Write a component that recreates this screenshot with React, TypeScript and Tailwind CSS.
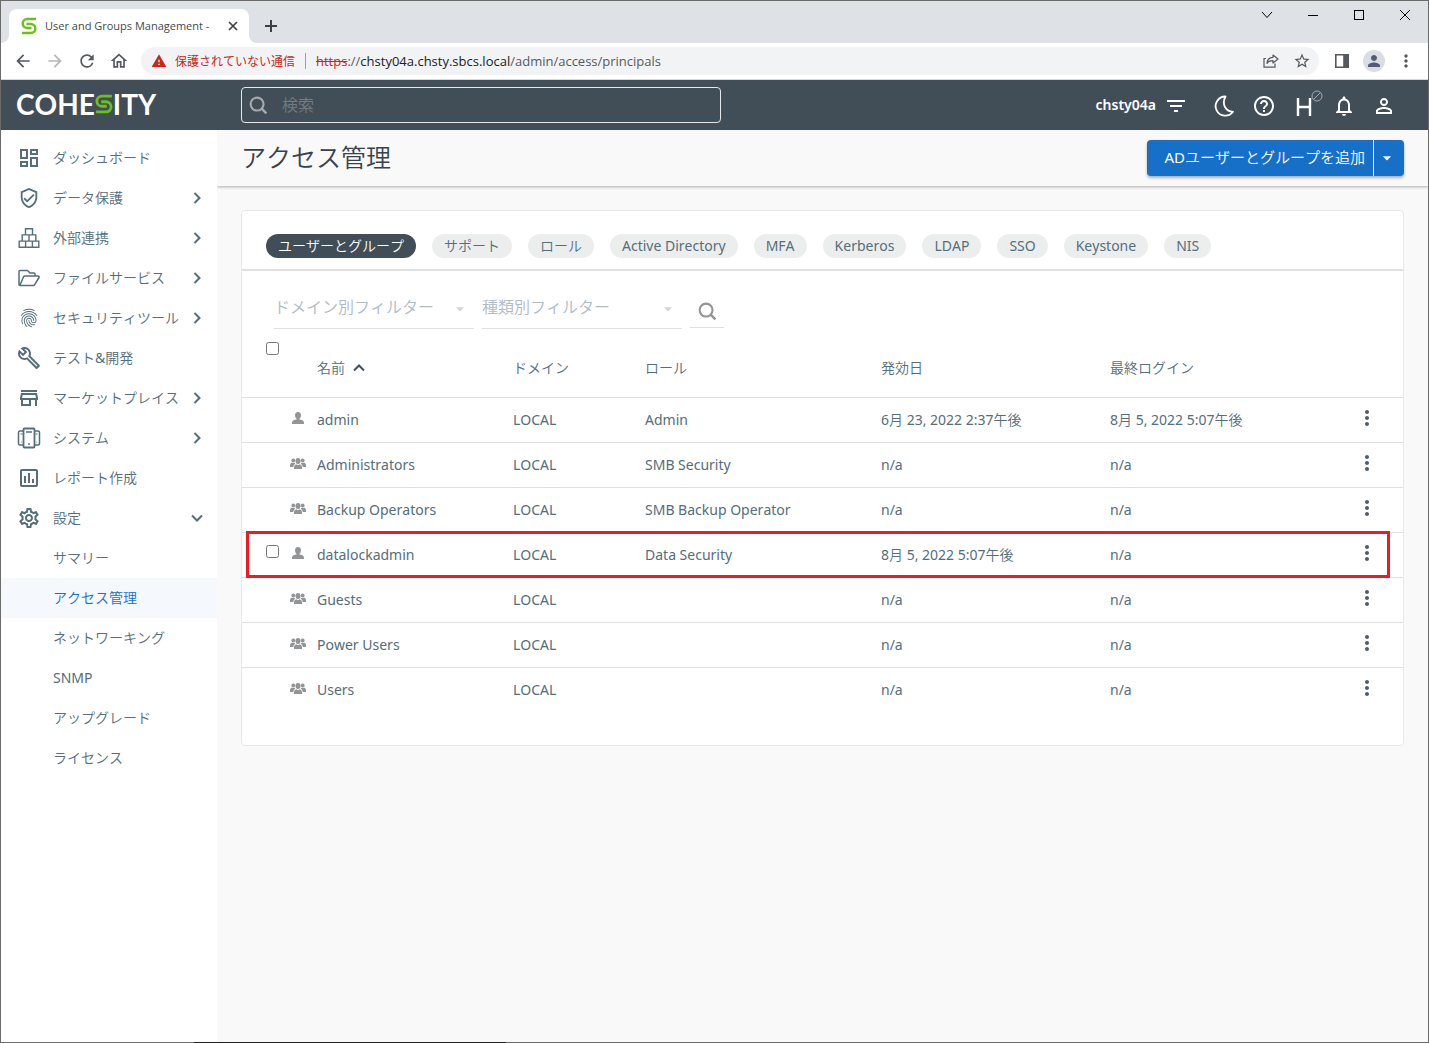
import type { ReactNode } from 'react'
import {
  MdArrowBack,
  MdArrowForward,
  MdRefresh,
  MdOutlineHome,
  MdWarning,
  MdStarBorder,
  MdMoreVert,
  MdPerson,
  MdFilterList,
  MdHelpOutline,
  MdNotificationsNone,
  MdPersonOutline,
  MdOutlineDashboard,
  MdOutlineVerifiedUser,
  MdFingerprint,
  MdOutlineBuild,
  MdOutlineStore,
  MdOutlineAssessment,
  MdOutlineSettings,
  MdArrowDropDown,
} from 'react-icons/md'

type NavItem = {
  label: string
  icon: ReactNode
  arrow?: 'right' | 'down'
}

type Principal = {
  name: string
  group: boolean
  role: string
  effective: string
  lastLogin: string
  selectable?: boolean
}

const principals: Principal[] = [
  { name: 'admin', group: false, role: 'Admin', effective: '6月 23, 2022 2:37午後', lastLogin: '8月 5, 2022 5:07午後' },
  { name: 'Administrators', group: true, role: 'SMB Security', effective: 'n/a', lastLogin: 'n/a' },
  { name: 'Backup Operators', group: true, role: 'SMB Backup Operator', effective: 'n/a', lastLogin: 'n/a' },
  { name: 'datalockadmin', group: false, role: 'Data Security', effective: '8月 5, 2022 5:07午後', lastLogin: 'n/a', selectable: true },
  { name: 'Guests', group: true, role: '', effective: 'n/a', lastLogin: 'n/a' },
  { name: 'Power Users', group: true, role: '', effective: 'n/a', lastLogin: 'n/a' },
  { name: 'Users', group: true, role: '', effective: 'n/a', lastLogin: 'n/a' },
]

const tabs = ['ユーザーとグループ', 'サポート', 'ロール', 'Active Directory', 'MFA', 'Kerberos', 'LDAP', 'SSO', 'Keystone', 'NIS']

const subItems = ['サマリー', 'アクセス管理', 'ネットワーキング', 'SNMP', 'アップグレード', 'ライセンス']

function CohesityMark({ className }: { className: string }) {
  return (
    <svg viewBox="0 0 16 18" className={className} fill="none" stroke="#6cc01e" strokeWidth="2.5" aria-hidden="true">
      <path d="M15 2H6.200a4.500 4.500 0 0 0 0 9H10.500" />
      <path d="M5.500 7H9.800a4.500 4.500 0 0 1 0 9H1" />
    </svg>
  )
}

function SearchIcon({ className }: { className: string }) {
  return (
    <svg viewBox="0 0 20 20" className={className} fill="none" stroke="currentColor" strokeWidth="2.2" aria-hidden="true">
      <circle cx="8.500" cy="8.500" r="6.800" />
      <path d="M13.300 13.300l5 5" strokeWidth="2.600" />
    </svg>
  )
}

function Chevron({ className }: { className: string }) {
  return (
    <svg viewBox="0 0 12 12" className={className} fill="none" stroke="currentColor" strokeWidth="2" aria-hidden="true">
      <path d="M3.500 1l5 5-5 5" />
    </svg>
  )
}

function BlocksIcon() {
  return (
    <svg viewBox="0 0 22 22" className="size-[22px]" fill="none" stroke="currentColor" strokeWidth="1.400" aria-hidden="true">
      <path d="M7.500 1.700h7v6.200h-7zM4.200 7.900h6.800v6.200H4.200zM11 7.900h6.800v6.200H11zM1.200 14.100h6.400v6.200H1.200zM7.600 14.100h6.800v6.200H7.600zM14.400 14.100h6.400v6.200h-6.400z" />
    </svg>
  )
}

function FolderIcon() {
  return (
    <svg viewBox="0 0 22 18" className="h-[18px] w-[22px]" fill="none" stroke="currentColor" strokeWidth="1.500" strokeLinejoin="round" aria-hidden="true">
      <path d="M17 7V5q0-1-1-1h-4L9.500 1.500H2q-1 0-1 1v13q0 1 1 1h13.500q.8 0 1.200-.8L21 8.500Q21.500 7 20 7H7q-1 0-1.400.8L2 16" />
    </svg>
  )
}

function SystemIcon() {
  return (
    <svg viewBox="0 0 24 22" className="h-[22px] w-6" fill="none" stroke="currentColor" strokeWidth="1.500" aria-hidden="true">
      <rect x="6.500" y="1.500" width="11" height="19" rx="1" strokeWidth="1.800" />
      <path d="M6 4H3Q1.500 4 1.500 5.500v11Q1.500 18 3 18h3M18 4h3q1.500 0 1.500 1.500v11Q22.500 18 21 18h-3M9 5h6" />
      <path d="M3.500 7h2M18.500 7h2" strokeWidth="1" />
      <circle cx="12" cy="17" r=".9" fill="currentColor" stroke="none" />
      <circle cx="4.300" cy="15" r=".5" fill="currentColor" stroke="none" />
      <circle cx="19.700" cy="15" r=".5" fill="currentColor" stroke="none" />
    </svg>
  )
}

function UserIcon() {
  return (
    <svg viewBox="0 0 12 12" className="size-3" fill="currentColor" aria-hidden="true">
      <path d="M6 0c2 0 3 1.300 3 3.200C9 5 8 6.600 7.200 7v.3l3.200.9c1 .4 1.400 1.200 1.600 2.600v1.200H0v-1.200c.2-1.400.6-2.200 1.600-2.600l3.200-.9V7C4 6.600 3 5 3 3.200 3 1.300 4 0 6 0z" />
    </svg>
  )
}

function GroupIcon() {
  return (
    <svg viewBox="0 0 16 11" className="h-[11px] w-4" fill="currentColor" aria-hidden="true">
      <circle cx="3.300" cy="2.400" r="1.900" />
      <circle cx="12.700" cy="2.400" r="1.900" />
      <ellipse cx="8" cy="3" rx="2.500" ry="3" />
      <path d="M0 9V7q.2-1.900 1.600-2.300h2.600q.6.200 1 .8Q3.400 7 3.200 9zM16 9V7q-.2-1.900-1.600-2.300h-2.600q-.6.200-1 .8Q12.600 7 12.800 9zM4 11V9q.2-2.200 2.200-2.700L8 7.200l1.800-.9Q11.800 6.800 12 9v2z" />
    </svg>
  )
}

const navItems: NavItem[] = [
  { label: 'ダッシュボード', icon: <MdOutlineDashboard className="size-6" /> },
  { label: 'データ保護', icon: <MdOutlineVerifiedUser className="size-[22px]" />, arrow: 'right' },
  { label: '外部連携', icon: <BlocksIcon />, arrow: 'right' },
  { label: 'ファイルサービス', icon: <FolderIcon />, arrow: 'right' },
  { label: 'セキュリティツール', icon: <MdFingerprint className="size-[22px]" />, arrow: 'right' },
  { label: 'テスト&開発', icon: <MdOutlineBuild className="size-6" /> },
  { label: 'マーケットプレイス', icon: <MdOutlineStore className="size-6" />, arrow: 'right' },
  { label: 'システム', icon: <SystemIcon />, arrow: 'right' },
  { label: 'レポート作成', icon: <MdOutlineAssessment className="size-6" /> },
  { label: '設定', icon: <MdOutlineSettings className="size-6" />, arrow: 'down' },
]

function BrowserChrome() {
  return (
    <div className="font-['Open_Sans','Noto_Sans_CJK_JP',sans-serif]">
      <div className="flex h-[42px] items-end bg-[#dee1e6]">
        <div className="relative ml-2 flex h-[34px] w-60 items-center rounded-t-lg bg-white pl-3">
          <svg viewBox="0 0 8 8" className="absolute -left-2 bottom-0 size-2 fill-white"><path d="M8 0v8H0a8 8 0 0 0 8-8z" /></svg>
          <svg viewBox="0 0 8 8" className="absolute -right-2 bottom-0 size-2 fill-white"><path d="M0 0v8h8a8 8 0 0 1-8-8z" /></svg>
          <CohesityMark className="h-[18px] w-4" />
          <span className="ml-2 text-[11px] leading-4 whitespace-nowrap text-[#45494d]">User and Groups Management -</span>
          <button aria-label="タブを閉じる" className="mr-[11px] ml-auto text-[#3c4043]">
            <svg viewBox="0 0 10 10" className="size-[10px]" fill="none" stroke="currentColor" strokeWidth="1.700"><path d="M1 1l8 8M9 1L1 9" /></svg>
          </button>
        </div>
        <button aria-label="新しいタブ" className="mb-[11px] ml-4 text-[#3c4043]">
          <svg viewBox="0 0 12 12" className="size-3" fill="none" stroke="currentColor" strokeWidth="2"><path d="M6 0v12M0 6h12" /></svg>
        </button>
        <div className="mr-[17px] mb-[22px] ml-auto flex items-center gap-[34px] text-black">
          <button aria-label="タブを検索"><svg viewBox="0 0 12 12" className="size-3" fill="none" stroke="currentColor"><path d="M1 3l5 5.500L11 3" /></svg></button>
          <button aria-label="最小化"><svg viewBox="0 0 12 12" className="size-3" fill="none" stroke="currentColor" shapeRendering="crispEdges"><path d="M1 6.500h10" /></svg></button>
          <button aria-label="最大化"><svg viewBox="0 0 12 12" className="size-3" fill="none" stroke="currentColor" shapeRendering="crispEdges"><path d="M1.500 1.500h9v9h-9z" /></svg></button>
          <button aria-label="閉じる"><svg viewBox="0 0 12 12" className="size-3" fill="none" stroke="currentColor"><path d="M1 1l10 10M11 1L1 11" /></svg></button>
        </div>
      </div>
      <div className="flex h-[37px] items-center border-b border-[#d6d8da] bg-white pl-3 text-[#55595e]">
        <button aria-label="戻る"><MdArrowBack className="size-5" /></button>
        <button aria-label="進む" className="ml-3 text-[#b5b7ba]"><MdArrowForward className="size-5" /></button>
        <button aria-label="再読み込み" className="ml-3"><MdRefresh className="size-5" /></button>
        <button aria-label="ホーム" className="ml-3"><MdOutlineHome className="size-5" /></button>
        <div className="ml-3 flex h-7 flex-1 items-center rounded-full bg-[#f1f3f4] pr-2 pl-[10px] text-[13px] leading-5">
          <MdWarning className="size-4 text-[#c5291c]" />
          <span className="ml-2 font-['Noto_Sans_CJK_JP',sans-serif] text-xs text-[#c5291c]">保護されていない通信</span>
          <span className="mx-[10px] h-4 w-px bg-[#9aa0a6]" />
          <span className="text-[#55595e]">
            <span className="text-[#c5291c] line-through">https</span>://<span className="text-[#202124]">chsty04a.chsty.sbcs.local</span>/admin/access/principals
          </span>
          <button aria-label="共有" className="ml-auto">
            <svg viewBox="0 0 16 14" className="h-[14px] w-4" fill="none" stroke="currentColor" strokeWidth="1.200">
              <path d="M3 4.500H1v8.700h11V9.500" />
              <path d="M10 1l5 4-5 4V6.700C7 6.600 5 7.300 4 9.500 4.200 6 6.500 3.600 10 3.300z" strokeLinejoin="round" />
            </svg>
          </button>
          <button aria-label="ブックマーク" className="ml-[14px]"><MdStarBorder className="size-[18px]" /></button>
        </div>
        <button aria-label="サイドパネル" className="ml-4">
          <svg viewBox="0 0 14 14" className="size-[14px]" fill="none" stroke="currentColor" strokeWidth="1.600"><path d="M.8.8h12.400v12.400H.8z" /><path d="M9 1h4v12H9z" fill="currentColor" /></svg>
        </button>
        <button aria-label="プロフィール" className="ml-[14px] flex size-[22px] items-center justify-center rounded-full bg-[#dadde3] text-[#535c75]"><MdPerson className="size-[18px]" /></button>
        <button aria-label="メニュー" className="mr-3 ml-[11px]"><MdMoreVert className="size-5" /></button>
      </div>
    </div>
  )
}

function Header() {
  return (
    <header className="flex h-[50px] items-center bg-[#414e58] pr-8 text-white">
      <div className="flex w-60 items-center pb-0.5 pl-[15px] font-['Lato',sans-serif] text-[28px] leading-[28px] font-bold">
        COHE
        <CohesityMark className="h-[22px] w-[18px]" />
        ITY
      </div>
      <label className="flex h-9 w-[480px] items-center rounded border border-[#e6e8ea] pl-[7px]">
        <SearchIcon className="size-[19px] text-[#a5a9ad]" />
        <input type="search" aria-label="検索" placeholder="検索" className="ml-[14px] min-w-0 flex-1 bg-transparent text-base outline-none placeholder:text-[#747c82]" />
      </label>
      <div className="ml-auto flex items-center pt-0.5">
        <button className="flex items-center text-sm leading-5 font-semibold">
          <span className="pb-0.5">chsty04a</span>
          <MdFilterList className="ml-2 size-6" />
        </button>
        <div className="ml-6 flex items-center gap-4">
          <button aria-label="ダークモード">
            <svg viewBox="0 0 24 24" className="size-6" fill="none" stroke="currentColor" strokeWidth="1.800" strokeLinejoin="round"><path d="M13.500 2.500A9.600 9.600 0 1 0 21 17.800C14.500 17.500 9 11 13.500 2.500z" /></svg>
          </button>
          <button aria-label="ヘルプ"><MdHelpOutline className="size-6" /></button>
          <button aria-label="Helios" className="relative size-6">
            <svg viewBox="0 0 24 24" className="size-6" fill="none" stroke="currentColor" strokeWidth="2.400"><path d="M6 4v18M18 4v18M6 13h12" /></svg>
            <svg viewBox="0 0 12 12" className="absolute -top-1 -right-[7px] size-3" fill="none" stroke="#a5abb0"><circle cx="6" cy="6" r="5" /><path d="M2.500 9.500l7-7" /></svg>
          </button>
          <button aria-label="通知"><MdNotificationsNone className="size-6" /></button>
          <button aria-label="アカウント"><MdPersonOutline className="size-6" /></button>
        </div>
      </div>
    </header>
  )
}

function Sidebar() {
  return (
    <nav className="w-[216px] shrink-0 bg-white pt-2 text-sm leading-5 text-[#546e7a]">
      {navItems.map((item) => (
        <a key={item.label} href="#" className="flex h-10 items-center pr-[14px] pl-4">
          <span className="flex w-6 justify-center">{item.icon}</span>
          <span className="ml-3 whitespace-nowrap">{item.label}</span>
          {item.arrow && <Chevron className={item.arrow === 'down' ? 'ml-auto size-3 rotate-90' : 'ml-auto size-3'} />}
        </a>
      ))}
      {subItems.map((label) => (
        <a
          key={label}
          href="#"
          className={label === 'アクセス管理' ? 'flex h-10 items-center bg-[#f5f9fe] pl-[52px] text-[#1670c8]' : 'flex h-10 items-center pl-[52px]'}
        >
          {label}
        </a>
      ))}
    </nav>
  )
}

function FilterSelect({ label }: { label: string }) {
  return (
    <label className="relative flex h-10 w-[200px] items-center border-b border-[#e0e0e0]">
      <select aria-label={label} className="h-10 w-full appearance-none bg-transparent pb-1 text-base text-[#b0babf] outline-none">
        <option>{label}</option>
      </select>
      <MdArrowDropDown className="pointer-events-none absolute right-1 size-5 text-[#d5d5d5]" />
    </label>
  )
}

function PrincipalsTable() {
  return (
    <table className="w-full table-fixed text-left text-sm leading-5">
      <colgroup>
        <col className="w-12" />
        <col className="w-[27px]" />
        <col className="w-[196px]" />
        <col className="w-[132px]" />
        <col className="w-[236px]" />
        <col className="w-[229px]" />
        <col />
        <col className="w-[72px]" />
      </colgroup>
      <thead>
        <tr className="h-[58px]">
          <th className="pl-6 align-top">
            <input type="checkbox" aria-label="すべて選択" className="mt-[3px] block size-[13px]" />
          </th>
          <th />
          <th className="font-normal">
            <button className="flex items-center">
              名前
              <Chevron className="ml-2 size-3 -rotate-90 text-[#424e58]" />
            </button>
          </th>
          <th className="font-normal">ドメイン</th>
          <th className="font-normal">ロール</th>
          <th className="font-normal">発効日</th>
          <th className="font-normal">最終ログイン</th>
          <th />
        </tr>
      </thead>
      <tbody>
        {principals.map((p) => (
          <tr key={p.name} className="relative h-[45px] border-t border-[#e0e0e0]">
            <td className="pl-6">
              {p.selectable && (
                <>
                  <input type="checkbox" aria-label={p.name} className="mb-1.5 block size-[13px]" />
                  <div className="pointer-events-none absolute -top-0.5 right-[13px] -bottom-px left-1 border-3 border-[#ed1c24]" />
                </>
              )}
            </td>
            <td className="text-[#929496]">
              <span className="mb-[3px] flex w-4 justify-center">{p.group ? <GroupIcon /> : <UserIcon />}</span>
            </td>
            <td>{p.name}</td>
            <td>LOCAL</td>
            <td>{p.role}</td>
            <td>{p.effective}</td>
            <td>{p.lastLogin}</td>
            <td>
              <button aria-label={`${p.name} の操作`} className="mb-1 ml-6 block text-[#535d66]">
                <MdMoreVert className="size-6" />
              </button>
            </td>
          </tr>
        ))}
      </tbody>
    </table>
  )
}

function AccessPage() {
  return (
    <main className="min-w-0 flex-1 overflow-hidden bg-[#f9f9f9]">
      <div className="flex h-14 items-center justify-between px-6 shadow-[0_1px_3px_rgba(0,0,0,0.3)]">
        <h1 className="pb-0.5 text-[25px] leading-8 text-[#37434c]">アクセス管理</h1>
        <div className="flex h-9 overflow-hidden rounded bg-[#1670c8] text-[15px] text-white shadow-[0_2px_3px_rgba(0,0,0,0.3)]">
          <button className="border-r border-white pr-2 pb-0.5 pl-[17px]">ADユーザーとグループを追加</button>
          <button aria-label="その他の操作" className="flex w-[30px] items-center justify-center pr-1"><MdArrowDropDown className="size-5 shrink-0" /></button>
        </div>
      </div>
      <section className="m-6 rounded border border-[#e8e8e8] bg-white pb-[33px] text-[#546e7a]">
        <div className="flex gap-4 border-b-2 border-[#e0e0e0] px-6 pt-[23px] pb-[11px] text-sm">
          {tabs.map((tab, i) => (
            <button
              key={tab}
              className={i === 0 ? 'h-6 rounded-full bg-[#414e58] px-3 leading-6 text-white' : 'h-6 rounded-full bg-[#eceeee] px-3 leading-6'}
            >
              {tab}
            </button>
          ))}
        </div>
        <div className="flex gap-2 px-8 pt-[18px] pb-[10px]">
          <FilterSelect label="ドメイン別フィルター" />
          <FilterSelect label="種類別フィルター" />
          <button aria-label="検索" className="flex h-[39px] w-[34px] items-center justify-center border-b border-[#e0e0e0] pt-[6px] text-[#929496]">
            <SearchIcon className="size-[19px]" />
          </button>
        </div>
        <PrincipalsTable />
      </section>
    </main>
  )
}

export default function App() {
  return (
    <div className="flex min-h-screen flex-col border-x border-t border-[#6b6b6b] font-['Noto_Sans','Noto_Sans_CJK_JP_DemiLight','Noto_Sans_CJK_JP',sans-serif] [font-kerning:none]">
      <BrowserChrome />
      <Header />
      <div className="flex flex-1">
        <Sidebar />
        <AccessPage />
      </div>
      <div className="flex h-px bg-[#6b6b6b]">
        <div className="ml-[193px] w-[312px] bg-[#222222]" />
      </div>
    </div>
  )
}
